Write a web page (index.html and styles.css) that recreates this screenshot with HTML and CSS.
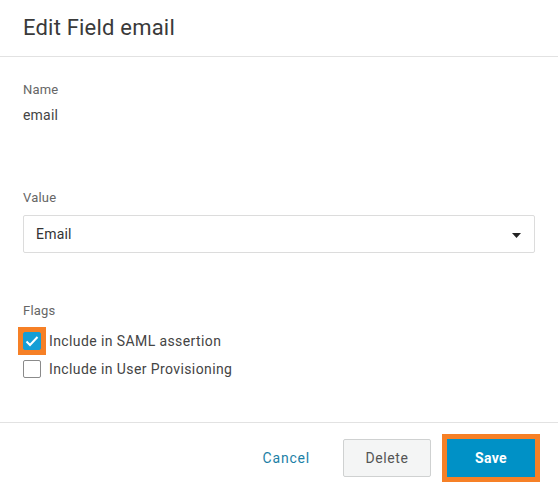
FILE: index.html
```html
<!DOCTYPE html>
<html>
<head>
<meta charset="utf-8">
<link rel="stylesheet" href="styles.css">
</head>
<body>
<div class="dialog">
  <div class="header"><h1 class="title">Edit Field email</h1></div>
  <div class="content">
    <div class="label">Name</div>
    <div class="static">email</div>
    <div class="label value-label">Value</div>
    <div class="select">
      <span>Email</span>
      <svg class="caret" width="9" height="5" viewBox="0 0 9 5"><path d="M0 0 L9 0 L4.5 5 Z" fill="#222"/></svg>
    </div>
    <div class="label flags-label">Flags</div>
    <div class="check-row">
      <span class="hl hl-box">
        <span class="box checked">
          <svg width="14" height="12" viewBox="0 0 14 12"><path d="M1.5 6.5 L5 10 L12.5 2" fill="none" stroke="#fff" stroke-width="2"/></svg>
        </span>
      </span>
      <span class="check-text">Include in SAML assertion</span>
    </div>
    <div class="check-row">
      <span class="box"></span>
      <span class="check-text">Include in User Provisioning</span>
    </div>
  </div>
  <div class="footer">
    <button class="btn cancel">Cancel</button>
    <button class="btn delete">Delete</button>
    <span class="hl hl-btn"><button class="btn save">Save</button></span>
  </div>
</div>
</body>
</html>
```
FILE: styles.css
```css
* { box-sizing: border-box; }
html, body { margin: 0; padding: 0; background: #fff; }
body { font-family: Roboto, "Liberation Sans", sans-serif; color: #333; }
.dialog { width: 558px; height: 493px; display: flex; flex-direction: column; }
.header { height: 57px; border-bottom: 1px solid #e2e2e2; padding: 0 23px; display: flex; align-items: center; }
.title { margin: 0 0 2px 0; font-size: 22px; font-weight: 400; color: #3a3a3a; letter-spacing: 0.2px; }
.content { padding: 25px 23px 0 23px; flex: 1; border-bottom: 1px solid #e2e2e2; }
.label { font-size: 13px; line-height: 16px; color: #666; letter-spacing: 0.2px; }
.static { font-size: 14px; line-height: 20px; margin-top: 7px; color: #444; letter-spacing: 0.2px; }
.value-label { margin-top: 65px; }
.select { margin-top: 9px; height: 38px; border: 1px solid #dcdcdc; border-radius: 2px; display: flex; align-items: center; justify-content: space-between; padding: 0 13px 0 12px; font-size: 14px; color: #333; letter-spacing: 0.2px; }
.caret { margin-top: 2px; }
.flags-label { margin-top: 50px; }
.check-row { display: flex; align-items: center; gap: 8px; height: 18px; margin-top: 13px; }
.check-row + .check-row { margin-top: 10px; }
.box { width: 18px; height: 18px; border: 1px solid #8a8a8a; border-radius: 2px; display: inline-flex; align-items: center; justify-content: center; flex: none; }
.box.checked { background: #159ed6; border-color: #159ed6; }
.check-text { font-size: 14px; color: #444; letter-spacing: 0.4px; }
.hl { background: #f68026; display: inline-flex; flex: none; }
.hl-box { padding: 5px; margin: -5px; }
.hl-btn { padding: 5px; margin: -5px; }
.footer { height: 70px; display: flex; align-items: flex-start; justify-content: flex-end; gap: 16px; padding: 16px 23px 0 0; }
.btn { font-family: Roboto, "Liberation Sans", sans-serif; font-size: 14px; height: 38px; border-radius: 2px; cursor: pointer; letter-spacing: 0.6px; }
.cancel { background: none; border: none; color: #1c7fa6; padding: 0 17px; letter-spacing: 0.8px; }
.delete { width: 88px; background: #f4f5f5; border: 1px solid #cfd1d1; color: #555; }
.save { width: 88px; background: #0091c6; border: none; border-radius: 0; color: #fff; font-weight: 700; letter-spacing: 0.3px; }
```
